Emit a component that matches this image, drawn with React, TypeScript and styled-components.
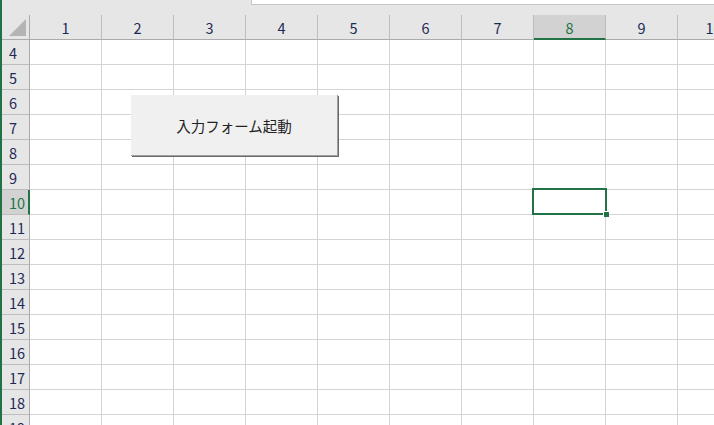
import React from "react";
import styled, { createGlobalStyle } from "styled-components";

const GREEN = "#217346";

const Global = createGlobalStyle`
  html, body { margin: 0; padding: 0; background: #fff; overflow: hidden; }
  body { font-family: "Noto Sans CJK JP", "Noto Sans", sans-serif; }
`;

const Window = styled.div`
  display: flex;
  width: 714px;
  height: 425px;
  overflow: hidden;
  background: #fff;
`;

const EdgeStrip = styled.div`
  width: 2px;
  flex: none;
  background: ${GREEN};
`;

const Main = styled.div`
  flex: 1;
  display: flex;
  flex-direction: column;
  min-width: 0;
  overflow: hidden;
`;

const TopBar = styled.div`
  height: 15px;
  flex: none;
  display: flex;
  background: #e6e6e6;
  padding-left: 249px;
`;

const FormulaBox = styled.div`
  flex: 1;
  height: 4px;
  background: #fff;
  border-left: 1px solid #c6c6c6;
  border-bottom: 1px solid #c6c6c6;
`;

const Sheet = styled.div`
  position: relative;
  display: grid;
  grid-template-columns: 28px repeat(10, 72px);
  grid-auto-rows: 25px;
`;

const Corner = styled.div`
  position: relative;
  background: #e6e6e6;
  border-right: 1px solid #ababab;
  border-bottom: 1px solid #ababab;
  box-sizing: border-box;
`;

const CornerTriangle = styled.div`
  position: absolute;
  right: 3px;
  bottom: 3px;
  width: 0;
  height: 0;
  border-left: 17px solid transparent;
  border-bottom: 17px solid #b4b4b4;
`;

const ColHeader = styled.div<{ $active?: boolean }>`
  box-sizing: border-box;
  display: flex;
  align-items: center;
  justify-content: center;
  font-size: 14.5px;
  color: ${(p) => (p.$active ? GREEN : "#1e2a55")};
  background: ${(p) => (p.$active ? "#d2d2d2" : "#e6e6e6")};
  border-right: 1px solid #bdbdbd;
  border-bottom: ${(p) => (p.$active ? `2px solid ${GREEN}` : "1px solid #ababab")};
  padding-top: ${(p) => (p.$active ? "1px" : "0")};
  white-space: nowrap;
`;

const RowHeader = styled.div<{ $active?: boolean }>`
  box-sizing: border-box;
  display: flex;
  align-items: center;
  padding-left: 7px;
  font-size: 14.5px;
  color: ${(p) => (p.$active ? GREEN : "#1e2a55")};
  background: ${(p) => (p.$active ? "#d2d2d2" : "#e6e6e6")};
  border-right: ${(p) => (p.$active ? `2px solid ${GREEN}` : "1px solid #ababab")};
  border-bottom: 1px solid #bdbdbd;
  white-space: nowrap;
`;

const Cell = styled.div`
  position: relative;
  box-sizing: border-box;
  border-right: 1px solid #d4d4d4;
  border-bottom: 1px solid #d4d4d4;
`;

const Selection = styled.div`
  position: absolute;
  left: -2px;
  top: -2px;
  right: -2px;
  bottom: -1px;
  border: 2px solid ${GREEN};
  pointer-events: none;
  z-index: 2;
`;

const FillHandle = styled.div`
  position: absolute;
  right: -4px;
  bottom: -4px;
  width: 5px;
  height: 5px;
  background: ${GREEN};
  border-left: 1px solid #fff;
  border-top: 1px solid #fff;
`;

const FormButton = styled.button`
  position: absolute;
  left: 129px;
  top: 80px;
  width: 207px;
  height: 61px;
  box-sizing: border-box;
  margin: 0;
  padding: 0;
  background: #f0f0f0;
  border: none;
  border-right: 1px solid #a0a0a0;
  border-bottom: 1px solid #a0a0a0;
  box-shadow: 1px 1px 0 #696969;
  font-family: "Noto Sans CJK JP", sans-serif;
  font-size: 14.5px;
  color: #222;
  z-index: 3;
  cursor: default;
`;

const COLS = Array.from({ length: 10 }, (_, i) => i + 1);
const ROWS = Array.from({ length: 16 }, (_, i) => i + 4);
const ACTIVE_COL = 8;
const ACTIVE_ROW = 10;

export default function App() {
  return (
    <>
      <Global />
      <Window>
        <EdgeStrip />
        <Main>
          <TopBar>
            <FormulaBox />
          </TopBar>
          <Sheet>
            <Corner>
              <CornerTriangle />
            </Corner>
            {COLS.map((c) => (
              <ColHeader key={`h${c}`} $active={c === ACTIVE_COL}>
                {c}
              </ColHeader>
            ))}
            {ROWS.map((r) => (
              <React.Fragment key={`r${r}`}>
                <RowHeader $active={r === ACTIVE_ROW}>{r}</RowHeader>
                {COLS.map((c) => (
                  <Cell key={`c${r}-${c}`}>
                    {r === ACTIVE_ROW && c === ACTIVE_COL && (
                      <Selection>
                        <FillHandle />
                      </Selection>
                    )}
                  </Cell>
                ))}
              </React.Fragment>
            ))}
            <FormButton>入力フォーム起動</FormButton>
          </Sheet>
        </Main>
      </Window>
    </>
  );
}
